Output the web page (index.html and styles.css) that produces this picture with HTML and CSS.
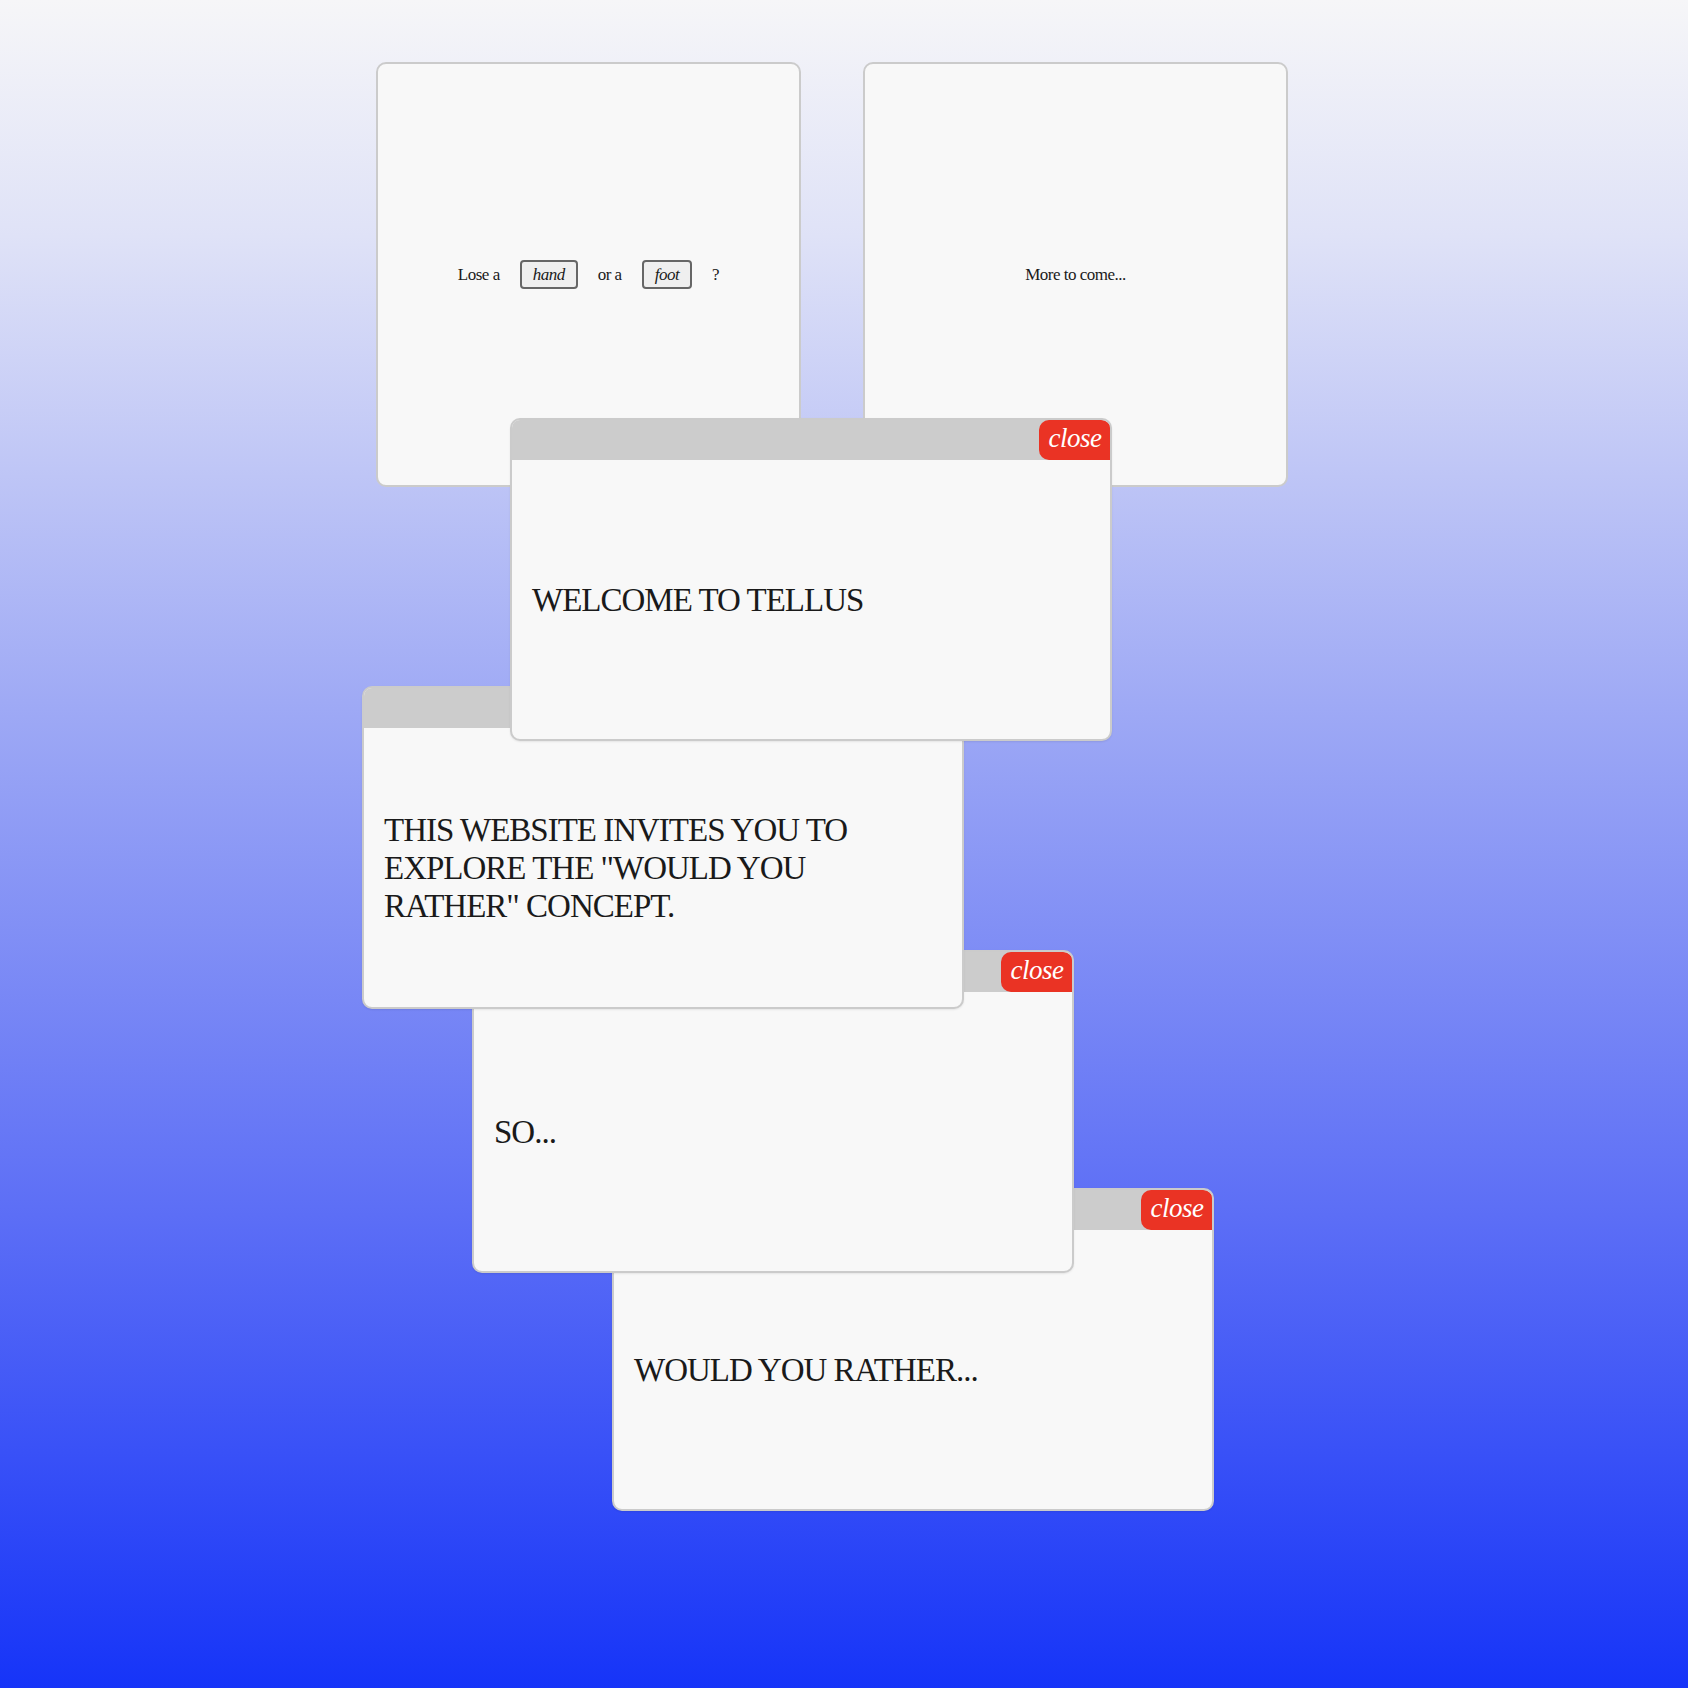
FILE: index.html
```html
<!DOCTYPE html>
<html lang="en">
<head>
<meta charset="utf-8">
<title>Tellus</title>
<link rel="stylesheet" href="styles.css">
</head>
<body>
<div class="desktop">
  <div class="cards">
    <div class="card">
      <div class="question">
        <span>Lose a</span>
        <button class="choice">hand</button>
        <span>or a</span>
        <button class="choice">foot</button>
        <span>?</span>
      </div>
    </div>
    <div class="card">
      <div class="question"><span>More to come...</span></div>
    </div>
  </div>

  <div class="window win-d">
    <div class="titlebar"><button class="close">close</button></div>
    <div class="body"><p class="big">WOULD YOU RATHER...</p></div>
  </div>
  <div class="window win-c">
    <div class="titlebar"><button class="close">close</button></div>
    <div class="body"><p class="big">SO...</p></div>
  </div>
  <div class="window win-b">
    <div class="titlebar"><button class="close">close</button></div>
    <div class="body"><p class="big narrow">THIS WEBSITE INVITES YOU TO EXPLORE THE "WOULD YOU RATHER" CONCEPT.</p></div>
  </div>
  <div class="window win-a">
    <div class="titlebar"><button class="close">close</button></div>
    <div class="body"><p class="big">WELCOME TO TELLUS</p></div>
  </div>
</div>
</body>
</html>
```

FILE: styles.css
```css
html, body {
  margin: 0;
  padding: 0;
}
body {
  width: 1688px;
  height: 1688px;
  background: linear-gradient(to bottom, #f6f6f8 0%, #dfe2f7 14%, #9ea9f5 42%, #5c6ef6 72%, #1634f8 100%);
  font-family: "Liberation Serif", "Times New Roman", serif;
  color: #1a1a1a;
  overflow: hidden;
}
.desktop {
  position: relative;
  width: 1688px;
  height: 1688px;
}
.cards {
  display: flex;
  gap: 62px;
  padding: 62px 0 0 376px;
}
.card {
  box-sizing: border-box;
  width: 425px;
  height: 425px;
  background: #f8f8f8;
  border: 2px solid #cbcbcb;
  border-radius: 10px;
  display: flex;
  align-items: center;
  justify-content: center;
}
.question {
  display: flex;
  align-items: center;
  gap: 20px;
  font-size: 17px;
  letter-spacing: -0.5px;
  line-height: 20px;
}
.choice {
  font-family: "Liberation Serif", "Times New Roman", serif;
  font-style: italic;
  font-size: 17px;
  letter-spacing: -0.5px;
  line-height: 25px;
  color: #1a1a1a;
  background: #efefef;
  border: 2px solid #666;
  border-radius: 4px;
  padding: 0 11px;
  margin: 0;
}
.window {
  position: absolute;
  box-sizing: border-box;
  width: 602px;
  height: 323px;
  background: #f8f8f8;
  border: 2px solid #cbcbcb;
  border-radius: 10px;
  overflow: hidden;
  display: flex;
  flex-direction: column;
  box-shadow: 0 1px 2px rgba(0, 0, 0, 0.08);
}
.win-a { left: 510px; top: 418px; }
.win-b { left: 362px; top: 686px; }
.win-c { left: 472px; top: 950px; }
.win-d { left: 612px; top: 1188px; }
.titlebar {
  height: 40px;
  flex: 0 0 40px;
  background: #cccccc;
  display: flex;
  justify-content: flex-end;
}
.close {
  width: 72px;
  height: 40px;
  margin: 0 -1px 0 0;
  padding: 0 0 4px;
  border: none;
  border-radius: 10px 10px 0 10px;
  background: #ea3324;
  color: #ffffff;
  font-family: "Liberation Serif", "Times New Roman", serif;
  font-style: italic;
  font-size: 27px;
  letter-spacing: -0.5px;
  line-height: 36px;
}
.body {
  flex: 1;
  display: flex;
  align-items: center;
  padding: 0 20px;
}
.big {
  margin: 0;
  font-size: 33px;
  letter-spacing: -1px;
  line-height: 38px;
  color: #1a1a1a;
}
.narrow {
  max-width: 500px;
}
```
